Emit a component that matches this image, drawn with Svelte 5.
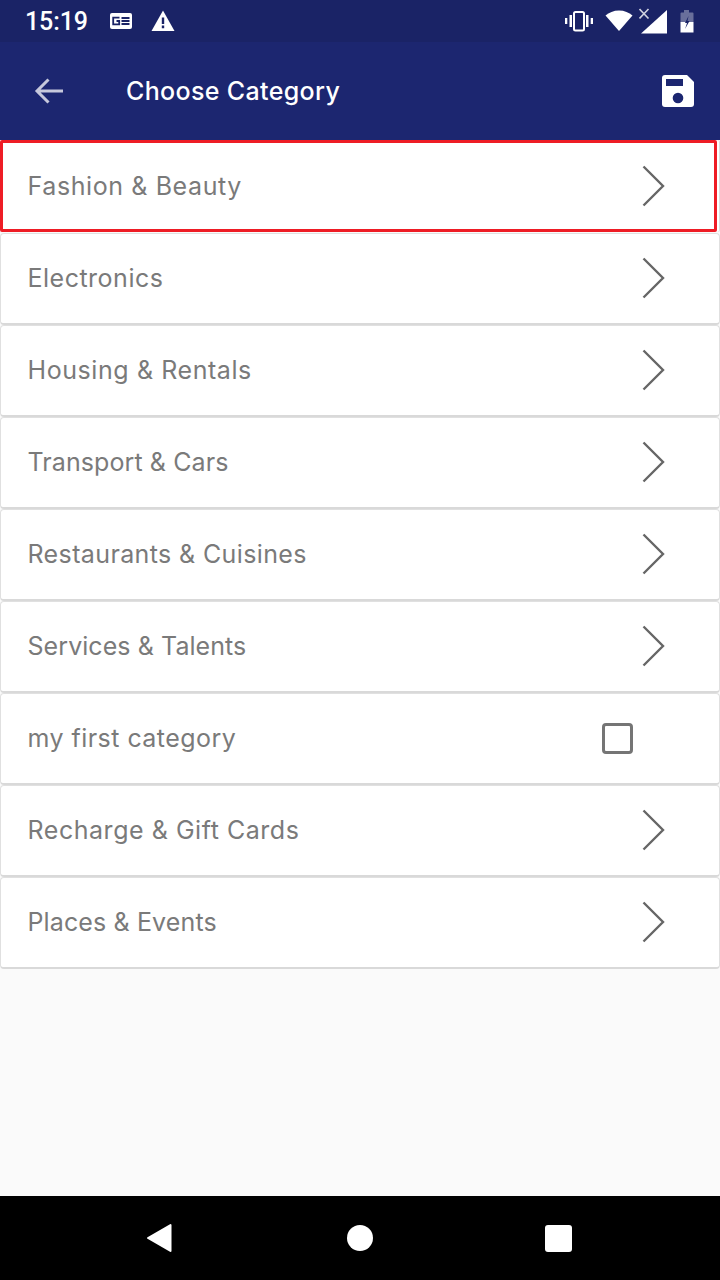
<script>
  const rows = [
    { label: 'Fashion & Beauty', selected: true, track: 0.6 },
    { label: 'Electronics', track: 0.5 },
    { label: 'Housing & Rentals', track: 0.58 },
    { label: 'Transport & Cars', track: 0.09 },
    { label: 'Restaurants & Cuisines', track: 0.38 },
    { label: 'Services & Talents', track: 0.07 },
    { label: 'my first category', check: true, track: 0.46 },
    { label: 'Recharge & Gift Cards', track: 0.54 },
    { label: 'Places & Events', track: 0.13 }
  ];
</script>

<div class="screen">
  <div class="status">
    <span class="time">15:19</span>
    <svg class="ic-news" width="24" height="18" viewBox="0 0 24 18">
      <path fill="#fff" d="M3 1h18a2 2 0 0 1 2 2v12a2 2 0 0 1-2 2H3a2 2 0 0 1-2-2V3a2 2 0 0 1 2-2z"/>
      <path fill="none" stroke="#1a2366" stroke-width="1.800" d="M10.500 5.700H4.200v6.600h6V9H7.500M12.500 6h8M12.500 9h8M12.500 12h8"/>
    </svg>
    <svg class="ic-warn" width="24" height="22" viewBox="0 0 24 22">
      <path fill="#fff" d="M12 .5 23.500 21H.5z"/>
      <path fill="#1a2366" d="M10.800 7.500h2.400V14h-2.400zM10.800 15.600h2.400v2.600h-2.400z"/>
    </svg>
    <span class="spacer"></span>
    <svg class="ic-vib" width="30" height="22" viewBox="0 0 30 22">
      <path fill="#fff" d="M1 8h2.300v6H1zM5.500 5H8v12H5.500zM22 5h2.500v12H22zM26.700 8H29v6h-2.300z"/>
      <rect x="10" y="2" width="10" height="18.500" rx="1.500" fill="none" stroke="#fff" stroke-width="2"/>
    </svg>
    <svg class="ic-wifi" width="28" height="22" viewBox="0 0 28 22">
      <path fill="#fff" d="M14 21 .5 5.500C4 2.500 8.500.5 14 .5s10 2 13.500 5z"/>
    </svg>
    <svg class="ic-sig" width="30" height="26" viewBox="0 0 30 26">
      <path fill="#fff" d="M28 2v23.500H2z"/>
      <path fill="none" stroke="#fff" stroke-opacity=".8" stroke-width="1.600" d="M.5 1l9 9.500M9.500 1l-9 9.500"/>
    </svg>
    <svg class="ic-bat" width="14" height="24" viewBox="0 0 14 24">
      <path fill="#fff" fill-opacity=".35" d="M4 1h5v2.500h3.500a1 1 0 0 1 1 1V13H.5V4.500a1 1 0 0 1 1-1H4z"/>
      <path fill="#fff" d="M.5 13h13v10.500H.5z"/>
      <path fill="#1a2366" d="M8.500 7 5 14h2l-2 6 4.500-8h-2z"/>
    </svg>
  </div>

  <header class="bar">
    <svg class="back" width="32" height="28" viewBox="0 0 32 28">
      <path fill="none" stroke="#c6c8dc" stroke-width="3" d="M30 14H5M15.500 2.500 4 14l11.500 11.500"/>
    </svg>
    <h1>Choose Category</h1>
    <svg class="save" width="32" height="32" viewBox="0 0 32 32">
      <path fill="#fff" d="M3 0h22l7 7v22a3 3 0 0 1-3 3H3a3 3 0 0 1-3-3V3a3 3 0 0 1 3-3z"/>
      <rect x="4" y="4" width="17" height="7" fill="#1c2670"/>
      <circle cx="16" cy="23" r="5.300" fill="#1c2670"/>
    </svg>
  </header>

  <main class="list">
    {#each rows as row}
      <div class="row" class:selected={row.selected}>
        <span class="label" style="letter-spacing: {row.track}px">{row.label}</span>
        {#if row.check}
          <span class="check"></span>
        {:else}
          <svg class="chev" width="24" height="42" viewBox="0 0 24 42">
            <path fill="none" stroke="#666" stroke-width="2.400" d="M1.500 1.500 21 21 1.500 40.500"/>
          </svg>
        {/if}
      </div>
    {/each}
  </main>

  <nav class="nav">
    <svg width="26" height="30" viewBox="0 0 26 30"><path fill="#fff" stroke="#fff" stroke-width="2" stroke-linejoin="round" d="M24.500 2v26L2 15z"/></svg>
    <span class="dot"></span>
    <span class="sq"></span>
  </nav>
</div>

<style>
  :global(body) { margin: 0; }
  .screen {
    width: 720px;
    height: 1280px;
    display: flex;
    flex-direction: column;
    background: #fafafa;
    overflow: hidden;
    font-family: "Inter", "Liberation Sans", sans-serif;
  }
  .status {
    height: 42px;
    flex: none;
    box-sizing: border-box;
    background: #1a2366;
    display: flex;
    align-items: center;
    padding: 0 26px 0 25px;
    color: #fff;
  }
  .time {
    font-family: "Roboto", sans-serif;
    font-size: 25px;
    font-weight: 500;
    color: #fff;
    width: 84px;
    letter-spacing: -0.1px;
  }
  .ic-warn { margin-left: 17.500px; }
  .spacer { flex: 1; }
  .ic-wifi { margin-left: 10.500px; }
  .ic-sig { margin-left: 6.500px; }
  .ic-bat { margin-left: 11px; }
  .bar {
    height: 98px;
    flex: none;
    background: #1c2670;
    display: flex;
    align-items: center;
    padding: 0 26px 0 33px;
    box-sizing: border-box;
  }
  h1 {
    margin: 0 0 0 61px;
    flex: 1;
    color: #fff;
    font-size: 25px;
    font-weight: 500;
    letter-spacing: 0.35px;
  }
  .list { flex: 1; display: flex; flex-direction: column; }
  .row {
    height: 92px;
    flex: none;
    box-sizing: border-box;
    background: #fff;
    border: 1px solid #e0e0e0;
    border-bottom: 2px solid #d9d9d9;
    border-radius: 4px;
    display: flex;
    align-items: center;
    padding: 0 0 1px 26.500px;
  }
  .row.selected {
    border: 3px solid #ee1c25;
    border-radius: 2px;
    padding: 0 0 0 24.500px;
    margin: 0 3px 1px 0;
    box-shadow: 2px 0 0 #fff, 3px 0 0 #ddd;
  }
  .label {
    flex: 1;
    font-size: 25px;
    color: #7a7a7a;
  }
  .chev { margin-right: 53px; }
  .row.selected .chev { margin-right: 48px; }
  .check {
    width: 25px;
    height: 25px;
    border: 3px solid #757575;
    border-radius: 4px;
    margin-right: 86px;
  }
  .nav {
    height: 84px;
    flex: none;
    background: #000;
    display: flex;
    align-items: center;
    justify-content: space-between;
    padding: 0 148px 0 146px;
  }
  .dot { width: 26px; height: 26px; border-radius: 50%; background: #fff; margin-left: 3px; }
  .sq { width: 27px; height: 27px; border-radius: 3px; background: #fff; }
</style>
